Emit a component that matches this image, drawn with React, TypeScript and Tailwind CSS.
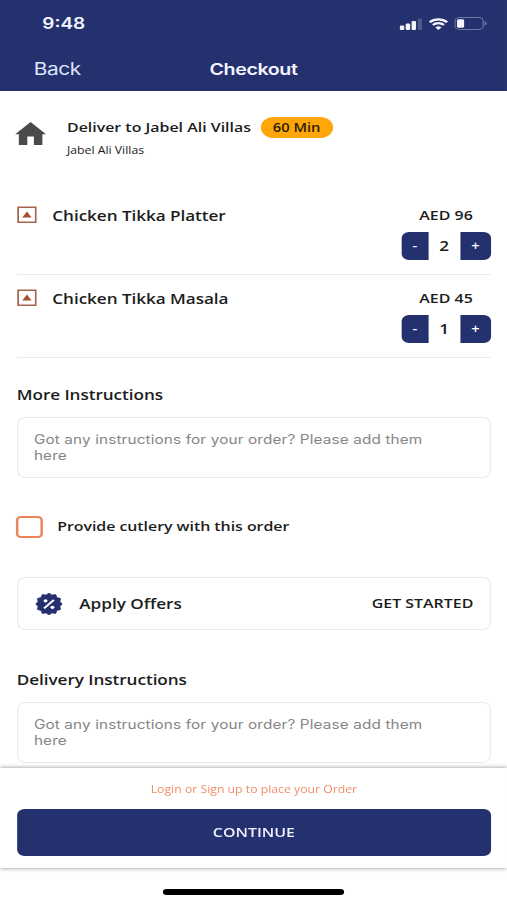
import type { ReactNode } from "react";

const sans = "font-['Open_Sans','Noto_Sans',sans-serif]";
const system = "font-['Inter','Liberation_Sans',sans-serif]";

function StatusBar() {
  return (
    <div className="flex h-[47px] items-center justify-between pr-[16.5px] pl-[34.5px]">
      <span className="text-[15.5px] leading-[20px] font-semibold">9:48</span>
      <div className="flex items-center gap-[5px]">
        <svg className="h-[12px] w-[19px]" viewBox="0 0 19 12" fill="currentColor">
          <rect x="0.5" y="7.4" width="3.6" height="4.6" rx="1" />
          <rect x="5.3" y="5.4" width="3.6" height="6.6" rx="1" />
          <rect x="10.1" y="3" width="3.6" height="9" rx="1" />
          <rect x="15" y="0.4" width="3.6" height="11.6" rx="1" opacity="0.2" />
        </svg>
        <svg className="h-[12px] w-[16px]" viewBox="0 0 16 12" fill="none" stroke="currentColor">
          <path d="M0.9 4.2a10.2 10.2 0 0 1 14.2 0" strokeWidth="2.2" />
          <path d="M3.5 7a6.4 6.4 0 0 1 9 0" strokeWidth="2.1" />
          <path d="M8 11.9L5.5 9.4a3.6 3.6 0 0 1 5 0z" fill="currentColor" stroke="none" />
        </svg>
        <svg className="h-[13px] w-[27px]" viewBox="0 0 27 13" fill="none">
          <rect x="0.6" y="0.6" width="23" height="11.8" rx="3.4" stroke="currentColor" strokeOpacity="0.35" />
          <rect x="2.2" y="2.2" width="5.8" height="8.6" rx="1.4" fill="currentColor" />
          <path d="M24.8 4.4v4.2c1-.4 1.5-1.2 1.5-2.1s-.5-1.7-1.5-2.1z" fill="currentColor" fillOpacity="0.4" />
        </svg>
      </div>
    </div>
  );
}

function Header() {
  return (
    <header className={`h-[91px] bg-[#24316e] text-[#f3f5ff] ${system}`}>
      <StatusBar />
      <nav className="grid h-[44px] grid-cols-3 items-center text-[17px] leading-[22px]">
        <span className="pl-[27.5px] tracking-[-0.3px] text-[#dfe4fa]">Back</span>
        <span className="text-center text-[16px] font-semibold tracking-[-0.3px]">Checkout</span>
      </nav>
    </header>
  );
}

function Address() {
  return (
    <section className="flex h-[83px] pt-[26px] pl-[12px]">
      <svg className="mt-[4px] h-[25px] w-[26px]" viewBox="0 0 26 25" fill="#4a4a4a">
        <path d="M13 1L25.6 13.2H22.6V24H15.7V15.4H10.3V24H3.4V13.2H0.4z" />
      </svg>
      <div className="ml-[16.7px]">
        <div className="flex h-[21px] items-start">
          <h1 className="w-[150px] text-[13px] leading-[20px] font-semibold whitespace-nowrap">
            Deliver to Jabel Ali Villas
          </h1>
          <span className="ml-[8px] flex h-[21px] w-[59px] items-center justify-center rounded-full bg-[#ffa60a] text-[12px] font-semibold text-[#2b1d00]">
            60 Min
          </span>
        </div>
        <p className="mt-[4px] text-[10px] leading-[16px]">Jabel Ali Villas</p>
      </div>
    </section>
  );
}

function Item({ name, price, count }: { name: string; price: string; count: number }) {
  return (
    <section className="flex h-[83px] items-start justify-between border-b-[1.5px] border-[#ececec]">
      <div className="flex items-start pt-[14px]">
        <svg className="h-[17px] w-[16px]" viewBox="0 0 16 17" fill="none">
          <rect x="0.75" y="1.25" width="14.5" height="15" stroke="#a5644a" strokeWidth="1.5" />
          <path d="M8 5.4L11.8 11.6H4.2z" fill="#a4512c" />
        </svg>
        <h2 className="ml-[13px] text-[14px] leading-[20px] font-semibold tracking-[-0.05px] whitespace-nowrap">
          {name}
        </h2>
      </div>
      <div className="flex w-[73.5px] flex-col">
        <div className="mt-[13px] flex h-[20px] items-center justify-center text-[13px] leading-[20px] font-semibold whitespace-nowrap">
          {price}
        </div>
        <div className="mt-[7px] flex h-[28px] items-center text-[14px] leading-[20px] font-semibold">
          <button className="h-[28px] w-[22.5px] rounded-l-[6px] bg-[#24316e] text-[12px] text-white">-</button>
          <span className="w-[25.5px] text-center">{count}</span>
          <button className="h-[28px] w-[25.5px] rounded-r-[6px] bg-[#24316e] text-[12px] text-white">+</button>
        </div>
      </div>
    </section>
  );
}

function Instructions({ title, children }: { title: string; children: ReactNode }) {
  return (
    <section>
      <h2 className="text-[14px] leading-[20px] font-semibold tracking-[-0.05px]">{title}</h2>
      <div
        className={`mt-[12px] h-[61px] rounded-[7px] border-[1.5px] border-[#ebebeb] pt-[14px] pr-[44px] pl-[13px] text-[12.5px] leading-[15.5px] tracking-[0.11px] text-[#868686] ${system}`}
      >
        {children}
      </div>
    </section>
  );
}

function OfferBadge() {
  const points = Array.from({ length: 24 }, (_, i) => {
    const r = i % 2 ? 9.2 : 11;
    const a = (i * Math.PI) / 12;
    return `${11 + r * Math.sin(a)},${11 - r * Math.cos(a)}`;
  }).join(" ");
  return (
    <svg className="h-[22px] w-[22px]" viewBox="0 0 22 22">
      <polygon points={points} fill="#24316e" stroke="#24316e" strokeWidth="0.6" strokeLinejoin="round" />
      <path d="M7 15.4L15 6.8" stroke="white" strokeWidth="1.7" />
      <circle cx="8.2" cy="7.8" r="1.6" fill="white" />
      <circle cx="13.8" cy="14.3" r="1.6" fill="white" />
    </svg>
  );
}

export default function App() {
  return (
    <div className="h-[900px] w-[507px] overflow-hidden bg-white">
      <div className={`flex h-[900px] w-[414px] origin-left scale-x-[1.2246] flex-col bg-white text-[#1c1c1c] ${sans}`}>
        <Header />
        <main className="h-[677px] overflow-hidden">
          <Address />
          <div className="pr-[13px] pl-[13.7px]">
            <div className="pt-[18px]">
              <Item name="Chicken Tikka Platter" price="AED 96" count={2} />
              <Item name="Chicken Tikka Masala" price="AED 45" count={1} />
            </div>
            <div className="pt-[27px]">
              <Instructions title="More Instructions">
                Got any instructions for your order? Please add them here
              </Instructions>
            </div>
            <label className="mt-[38px] flex h-[22px] items-center text-[13px] font-semibold tracking-[-0.03px]">
              <span className="-ml-px h-[22px] w-[22px] rounded-[4px] border-2 border-[#ee8258]" />
              <span className="ml-[12px]">Provide cutlery with this order</span>
            </label>
            <section className="mt-[39px] flex h-[53px] items-center rounded-[7px] border-[1.5px] border-[#ebebeb] pr-[13.5px] pl-[14px] font-semibold">
              <OfferBadge />
              <span className="ml-[14px] text-[14px]">Apply Offers</span>
              <span className="ml-auto text-[13px]">GET STARTED</span>
            </section>
            <div className="pt-[40px]">
              <Instructions title="Delivery Instructions">
                Got any instructions for your order? Please add them here
              </Instructions>
            </div>
          </div>
        </main>
        <footer className="relative flex h-[100px] shrink-0 flex-col bg-white pt-[13px] pr-[13px] pl-[13.7px] shadow-[0_0_4px_rgba(0,0,0,0.45)]">
          <p className="text-center text-[10px] leading-[17px] text-[#f08e66]">Login or Sign up to place your Order</p>
          <button className="mt-[11px] h-[46.5px] rounded-[6px] bg-[#24316e] text-[13px] font-semibold text-[#eef1ff]">
            CONTINUE
          </button>
        </footer>
        <div className="mx-auto mt-[21px] h-[6px] w-[148px] rounded-full bg-black" />
      </div>
    </div>
  );
}
